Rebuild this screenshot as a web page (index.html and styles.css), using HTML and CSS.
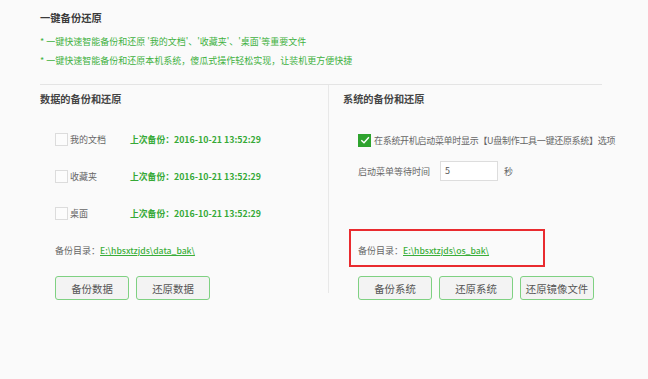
FILE: index.html
```html
<!DOCTYPE html>
<html lang="zh-CN">
<head>
<meta charset="utf-8">
<link rel="stylesheet" href="styles.css">
</head>
<body>
<div class="page">
  <div class="intro">
    <div class="title">一键备份还原</div>
    <div class="bullet">* 一键快速智能备份和还原 '我的文档'、'收藏夹'、'桌面'等重要文件</div>
    <div class="bullet b2">* 一键快速智能备份和还原本机系统，傻瓜式操作轻松实现，让装机更方便快捷</div>
  </div>
  <div class="panels">
    <div class="col left">
      <div class="heading">数据的备份和还原</div>
      <div class="rows">
        <div class="row"><span class="box"></span><span class="lbl">我的文档</span><span class="last">上次备份：2016-10-21 13:52:29</span></div>
        <div class="row"><span class="box"></span><span class="lbl">收藏夹</span><span class="last">上次备份：2016-10-21 13:52:29</span></div>
        <div class="row"><span class="box"></span><span class="lbl">桌面</span><span class="last">上次备份：2016-10-21 13:52:29</span></div>
      </div>
      <div class="dir ldir">备份目录：<a class="link">E:\hbsxtzjds\data_bak\</a></div>
      <div class="btns"><button class="btn">备份数据</button><button class="btn">还原数据</button></div>
    </div>
    <div class="col right">
      <div class="heading">系统的备份和还原</div>
      <div class="opt"><span class="gbox"><svg width="12" height="12" viewBox="0 0 12 12"><path d="M2.3 6.2 L5 8.8 L9.9 3.2" fill="none" stroke="#fff" stroke-width="1.4"/></svg></span><span class="opttext">在系统开机启动菜单时显示【U盘制作工具一键还原系统】选项</span></div>
      <div class="wait"><span class="wlbl">启动菜单等待时间</span><span class="inp">5</span><span class="sec">秒</span></div>
      <div class="redbox"><div class="dir">备份目录：<a class="link">E:\hbsxtzjds\os_bak\</a></div></div>
      <div class="btns rbtns"><button class="btn">备份系统</button><button class="btn">还原系统</button><button class="btn">还原镜像文件</button></div>
    </div>
  </div>
</div>
</body>
</html>
```
FILE: styles.css
```css
html, body { margin: 0; padding: 0; }
body {
  background: #fafafa;
  font-family: "Microsoft YaHei", "Noto Sans CJK SC", "Noto Sans", sans-serif;
  width: 648px;
  height: 379px;
  overflow: hidden;
  color: #555;
}
.page { margin-left: 40px; width: 562px; }
.intro { padding-top: 10px; }
.title { font-size: 10.3px; font-weight: 700; color: #3a3a3a; line-height: 16px; }
.bullet { font-size: 9px; color: #3fb13f; line-height: 14px; margin-top: 9px; white-space: nowrap; }
.bullet.b2 { margin-top: 5px; }
.panels {
  margin-top: 16px;
  display: grid;
  grid-template-columns: 288px 274px;
  border-top: 1px solid #e4e4e4;
  align-items: start;
}
.col { padding-top: 7px; }
.right { border-left: 1px solid #e8e8e8; padding-left: 14px; }
.heading { font-size: 10.2px; font-weight: 700; color: #444; line-height: 14px; }
.rows { margin-top: 23px; padding-left: 15px; display: flex; flex-direction: column; gap: 17px; }
.row { display: flex; align-items: center; height: 20px; font-size: 9px; white-space: nowrap; }
.box { width: 11px; height: 11px; border: 1px solid #dcdcdc; background: #fcfcfc; margin-right: 2px; }
.lbl { width: 60px; color: #666; }
.last { color: #36a936; font-weight: 700; font-size: 8.8px; }
.dir { font-size: 9px; line-height: 14px; color: #666; white-space: nowrap; }
.ldir { margin-top: 20px; padding-left: 15px; }
.link { color: #3aae3a; text-decoration: underline; font-weight: 500; font-size: 8.6px; }
.btns { display: flex; gap: 7px; margin-top: 18px; padding-left: 15px; }
.btn {
  width: 74px; height: 24px;
  border: 1px solid #7fd182;
  border-radius: 3px;
  background: #f3f3f3;
  font-family: inherit;
  font-size: 10.4px;
  color: #555;
  padding: 0;
}
.opt { margin-top: 24px; padding-left: 15px; height: 20px; display: flex; align-items: center; font-size: 9px; color: #666; white-space: nowrap; }
.gbox { flex: none; width: 13px; height: 13px; background: #2ea32e; display: flex; align-items: center; justify-content: center; margin-right: 3px; }
.gbox svg { display: block; }
.opttext { letter-spacing: -0.3px; }
.wait { margin-top: 11px; padding-left: 15px; height: 20px; display: flex; align-items: center; font-size: 9px; color: #666; }
.wlbl { width: 82px; }
.inp { width: 52px; height: 18px; border: 1px solid #ddd; background: #fff; padding-left: 4px; line-height: 18px; color: #555; }
.sec { margin-left: 6px; }
.redbox {
  margin-top: 48px;
  margin-left: 6px;
  width: 178px;
  border: 2px solid #e92b2f;
  padding: 12px 7px 7px 7px;
}
.rbtns { margin-top: 9px; margin-bottom: -7px; }
```
